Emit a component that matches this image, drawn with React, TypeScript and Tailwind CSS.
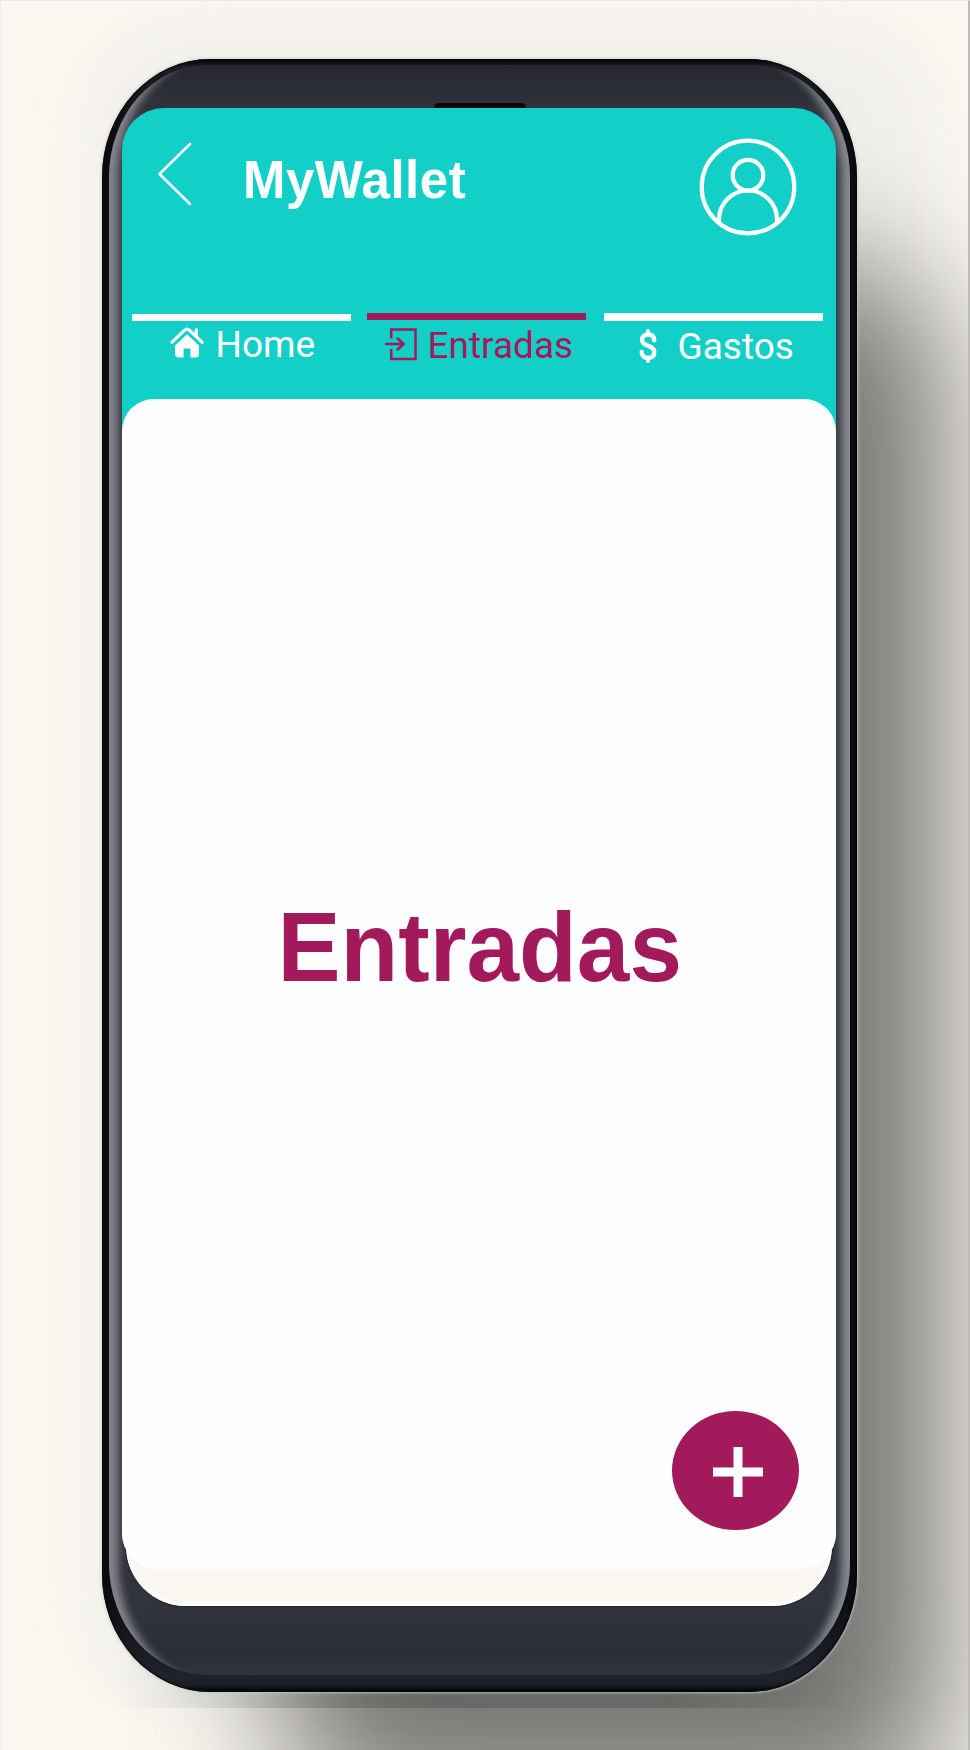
import React from "react";

function BackIcon() {
  return (
    <svg className="block h-[64px] w-[36px]" viewBox="0 0 36 64" fill="none" stroke="white" strokeWidth="2.5" strokeLinecap="round" strokeLinejoin="round">
      <path d="M33 2 2.5 32 33 62" />
    </svg>
  );
}

function UserIcon() {
  return (
    <svg className="block h-[98px] w-[98px]" viewBox="0 0 98 98" fill="none" stroke="white" strokeWidth="4.2">
      <circle cx="49" cy="49" r="46.3" />
      <circle cx="49" cy="37.2" r="15.3" />
      <path d="M20 84.5V81.5a29 29 0 0 1 58 0V84.5" />
    </svg>
  );
}

function HomeIcon() {
  return (
    <svg className="block h-[32px] w-[34px] shrink-0" viewBox="0 0 34 32">
      <path d="M2 16.2 14.7 4.2Q17 2 19.3 4.2L32 16.2M26.3 10V3.8" fill="none" stroke="white" strokeWidth="3.2" strokeLinecap="round" />
      <path d="M17 8.2 29 19.5V28Q29 31.6 25.4 31.6H20.4V22.6H13.6V31.6H8.6Q5 31.6 5 28V19.5Z" fill="white" />
    </svg>
  );
}

function EnterIcon() {
  return (
    <svg className="block h-[34px] w-[34px] shrink-0" viewBox="0 0 34 34" fill="none" stroke="#a21a5c" strokeWidth="2.5">
      <path d="M7.2 11.5V2.5H31.5V32H7.2V22" />
      <path d="M1 17H20M13 11 19.5 17 13 23" strokeWidth="2.7" />
    </svg>
  );
}

function DollarIcon() {
  return (
    <svg className="block h-[36px] w-[20px] shrink-0" viewBox="0 0 20 36" fill="none" stroke="white" strokeWidth="4.4" strokeLinecap="round">
      <path d="M10 3V6M10 31V33" strokeWidth="4" />
      <path d="M16.2 12.2C16.2 8.6 14 6.5 10.2 6.5S4 8.7 4 12C4 19.3 16.3 16.3 16.3 24.2C16.3 27.8 14 30 10.2 30S3.7 27.6 3.7 24" />
    </svg>
  );
}

function Header() {
  return (
    <header className="flex h-[206px] items-start pt-[34px] pl-[34.5px] pr-[38.5px]">
      <button aria-label="Volver"><BackIcon /></button>
      <h1 className="ml-[50.5px] mt-[10px] origin-[0_46px] scale-y-[1.045] font-['Liberation_Sans',Arial,sans-serif] text-[51px] leading-[58px] font-bold tracking-[0.5px] text-white">
        MyWallet
      </h1>
      <div className="ml-auto -mt-[4px]"><UserIcon /></div>
    </header>
  );
}

function Tabs() {
  return (
    <nav className="flex h-[85px] items-start pl-[9.5px] font-[Roboto,sans-serif] text-[37px] leading-[44px]">
      <div className="w-[219px] text-white">
        <div className="h-[7px] rounded-[1px] bg-white" />
        <div className="flex items-start pl-[38px]">
          <div className="mt-[5px]"><HomeIcon /></div>
          <span className="ml-[12px] mt-[2px]">Home</span>
        </div>
      </div>
      <div className="ml-[16px] -mt-px w-[219px] text-[#a21a5c]">
        <div className="h-[7px] bg-[#a21a5c]" />
        <div className="flex items-start pl-[17px]">
          <div className="mt-[7px]"><EnterIcon /></div>
          <span className="ml-[10px] mt-[4px]">Entradas</span>
        </div>
      </div>
      <div className="ml-[18px] -mt-px w-[219px] text-white">
        <div className="h-[8px] rounded-[1px] bg-white" />
        <div className="flex items-start pl-[34px]">
          <div className="mt-[7px]"><DollarIcon /></div>
          <span className="ml-[20px] mt-[4px]">Gastos</span>
        </div>
      </div>
    </nav>
  );
}

function Screen() {
  return (
    <div className="relative z-10 h-[1461px] overflow-hidden rounded-t-[42px] rounded-b-[36px] bg-[linear-gradient(#12d0c7_500px,#fefefe_560px)]">
      <Header />
      <Tabs />
      <main className="flex h-[1170px] flex-col rounded-[32px] bg-[#fefefe]">
        <h2 className="ml-[2px] mt-[495px] origin-[50%_86px] scale-y-[1.045] text-center font-['Liberation_Sans',Arial,sans-serif] text-[94.5px] leading-[108px] font-bold text-[#a21a5c]">
          Entradas
        </h2>
        <button aria-label="Agregar" className="mt-auto mr-[36.5px] mb-[39px] flex h-[119.5px] w-[127px] items-center justify-center self-end rounded-[50%] bg-[#a21a5c]">
          <svg className="ml-[5px] mt-[3px] h-[50px] w-[50px]" viewBox="0 0 50 50" stroke="white" strokeWidth="9">
            <path d="M25 0V50M0 25H50" />
          </svg>
        </button>
      </main>
    </div>
  );
}

export default function App() {
  return (
    <div className="relative h-[1750px] w-[970px] overflow-hidden bg-[#faf7f1] pt-[59px] pl-[102px]">
      <div className="absolute top-[30px] left-[90px] h-[1670px] w-[840px] rounded-[100px] bg-[#dedfda]/30 blur-[30px]" />
      <div className="absolute top-[265px] left-[280px] h-[1560px] w-[665px] rounded-[110px] bg-black/50 blur-[66px]" />
      <div className="absolute top-[1640px] left-[110px] h-[68px] w-[740px] bg-[linear-gradient(90deg,transparent,rgb(0_0_0/0.16)_30%,rgb(0_0_0/0.16)_75%,transparent)]" />
      <div className="relative h-[1633px] w-[755px] rounded-[108px/118px] bg-[linear-gradient(#08090c_2px,#1d1e25_8px,#0c0d11_80px,#0c0d11_1540px,#20232a_1616px,#1b1e24_1626px,#08090c_1631px)] pt-[49px] pl-[20px] shadow-[inset_0_0_2px_1px_#08090c,0_0_3px_1px_rgb(205_205_203/0.8)]">
        <div className="absolute top-[6px] right-[7px] bottom-[17px] left-[7px] rounded-[98px/112px] bg-[linear-gradient(#26272f,#31333d_45px,#31333d_1540px,#2b2e37_1590px,#30333a)] shadow-[inset_24px_0_8px_-15px_#85858c,inset_-24px_0_8px_-15px_#85888e]" />
        <div className="absolute top-[44px] left-[332px] h-[10px] w-[92px] rounded-t-[5px] bg-[#08090c]" />
        <div className="w-[713.5px]">
          <Screen />
          <div className="relative mx-[3.5px] -mt-[80px] h-[117px] rounded-b-[60px] bg-[#faf7f1] shadow-[inset_0_-3px_4px_white,0_0_2px_#0b0c10]" />
        </div>
      </div>
      <div className="pointer-events-none absolute inset-0 border-t border-r-2 border-l border-t-[#eeebe6] border-r-[#bdbcb9] border-l-[#eeebe6]" />
    </div>
  );
}
